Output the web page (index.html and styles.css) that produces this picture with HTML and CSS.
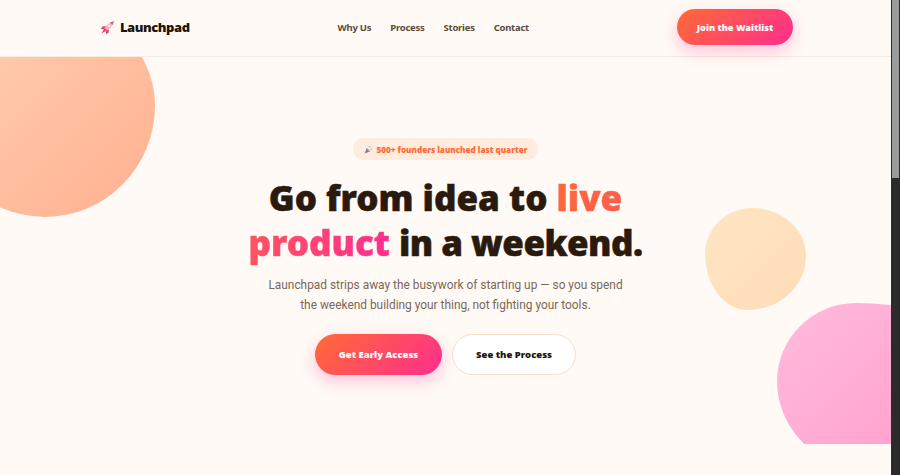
FILE: index.html
```html
<!DOCTYPE html>
<html lang="en">
<head>
<meta charset="utf-8">
<title>Launchpad</title>
<link rel="stylesheet" href="styles.css">
</head>
<body>
<div class="page">
  <main class="content">
    <header class="nav">
      <a class="logo">
        <svg class="logo-icon" viewBox="0 0 16 16" aria-hidden="true">
          <path d="M6.500 6.500 2.500 6.800 1 9.500l3.500.5z" fill="#ea3a68"/>
          <path d="M9.500 9.500 9.200 13.500 6.500 15l-.5-3.500z" fill="#ea3a68"/>
          <path d="M4.200 9.800C6 5.500 9.500 2.500 14.800 1.200 13.500 6.500 10.500 10 6.200 11.800z" fill="#f3b4c6"/>
          <path d="M10.800 2.700 14.800 1.200 13.300 5.200z" fill="#d9566f"/>
          <circle cx="9.800" cy="6.200" r="1.300" fill="#f7f1f4"/>
          <path d="M4.500 9.500 1.500 14.500 6.500 11.500z" fill="#e62c5f"/>
          <path d="M4.200 9.800 6.200 11.800 7.800 10.900 5 8.300z" fill="#ef4a74"/>
        </svg>
        <span>Launchpad</span>
      </a>
      <nav class="links">
        <a>Why Us</a><a>Process</a><a>Stories</a><a>Contact</a>
      </nav>
      <a class="btn btn-primary btn-nav">Join the Waitlist</a>
    </header>
    <section class="hero">
      <div class="blob blob-a"></div>
      <div class="blob blob-b"></div>
      <div class="blob blob-c"></div>
      <div class="hero-inner">
        <div class="badge">
          <svg class="badge-icon" viewBox="0 0 10 10" aria-hidden="true">
            <path d="M.8 9.500 3 3.300 6.800 7z" fill="#7d7a92"/>
            <path d="M3 3.300 6.800 7 5.800 7.600 2.400 4.800z" fill="#a9a3b8"/>
            <path d="M6 1.200l1.100.8-1.200 1.100zM8 4l1.300.3-.8 1.200zM4.300.6l.8.7-.9.6z" fill="#7f9fca"/>
            <path d="M7.500 1.200l1.100.8-.9.9zM6.500 5l1.200-.7.5 1z" fill="#e08a9c"/>
          </svg>
          <span>500+ founders launched last quarter</span>
        </div>
        <h1>Go from idea to <span class="live">live</span> <span class="product">product</span> <span class="tail">in a weekend.</span></h1>
        <p>Launchpad strips away the busywork of starting up — so you spend the weekend building your thing, not fighting your tools.</p>
        <div class="actions">
          <a class="btn btn-primary btn-big">Get Early Access</a>
          <a class="btn btn-ghost btn-big">See the Process</a>
        </div>
      </div>
    </section>
  </main>
  <div class="scrollbar"><div class="thumb"></div></div>
</div>
</body>
</html>
```
FILE: styles.css
```css
* { box-sizing: border-box; }
html, body { margin: 0; height: 100%; overflow: hidden; }
body { font-family: "Noto Sans", Lato, sans-serif; background: #fffaf5; color: #2a1a0e; }
.page { display: flex; height: 475px; }
.content { flex: 1; min-width: 0; }
.scrollbar { width: 9px; background: #2b2b2b; padding: 0 1px; }
.thumb { height: 178px; background: #9b9b9b; }
.nav { height: 57px; display: flex; align-items: center; justify-content: space-between; padding: 0 98px 2px 100px; border-bottom: 1px solid #f5ebe0; }
.logo { display: flex; align-items: center; gap: 5px; font-size: 13px; font-weight: 900; letter-spacing: -.45px; color: #1f130a; }
.logo-icon { width: 15px; height: 15px; }
.links { display: flex; gap: 19px; font-size: 9.5px; font-weight: 700; letter-spacing: -.25px; color: #5c4a3a; }
.btn { display: inline-flex; align-items: center; justify-content: center; border-radius: 50px; font-weight: 900; }
.btn-primary { color: #fff; background: linear-gradient(135deg, #ff6b35, #ff2d8e); box-shadow: 0 6px 16px rgba(255, 45, 142, .28); }
.btn-nav { width: 116px; height: 36px; font-size: 9.2px; }
.btn-big { height: 41px; font-size: 9.5px; }
.btn-ghost { width: 124px; background: #fff; color: #1f130a; border: 1px solid #f5dfc8; }
.btn-primary.btn-big { width: 127px; }
.hero { position: relative; height: 387px; overflow: hidden; }
.blob { position: absolute; }
.blob-a { left: -65px; top: -63px; width: 220px; height: 223px; border-radius: 40% 60% 50% 50% / 50% 50% 50% 50%; background: linear-gradient(135deg, #ffd3b6, #ffb090); }
.blob-b { left: 705px; top: 151px; width: 101px; height: 102px; border-radius: 47% 53% 58% 42% / 45% 47% 53% 55%; background: linear-gradient(135deg, #ffe6c4, #ffdcb8); }
.blob-c { left: 777px; top: 246px; width: 240px; height: 170px; border-radius: 33% 67% 58% 42% / 46% 50% 50% 54%; background: linear-gradient(135deg, #ffbcdc, #ff94c8); }
.hero-inner { position: relative; display: flex; flex-direction: column; align-items: center; padding-top: 81px; text-align: center; }
.badge { display: flex; align-items: center; gap: 4px; height: 22px; padding: 0 11px; border-radius: 20px; background: #ffecdf; color: #ff6b35; font-size: 8.100px; font-weight: 900; }
.badge-icon { width: 9px; height: 9px; }
h1 { width: 440px; margin: 15px 0 0; font-size: 35px; line-height: 45px; font-weight: 900; color: #2a1a0e; -webkit-text-stroke: .5px; }
.tail { letter-spacing: -.55px; }
.live, .product { -webkit-background-clip: text; background-clip: text; color: transparent; }
.live { background-image: linear-gradient(135deg, #ff6b35, #ff5a52); }
.product { background-image: linear-gradient(100deg, #ff5560, #ff2d8e); }
p { width: 360px; margin: 10px 0 0; font-family: Roboto, sans-serif; font-size: 11.9px; line-height: 20px; color: #7a6858; }
.actions { display: flex; gap: 10px; margin-top: 19px; }
```
